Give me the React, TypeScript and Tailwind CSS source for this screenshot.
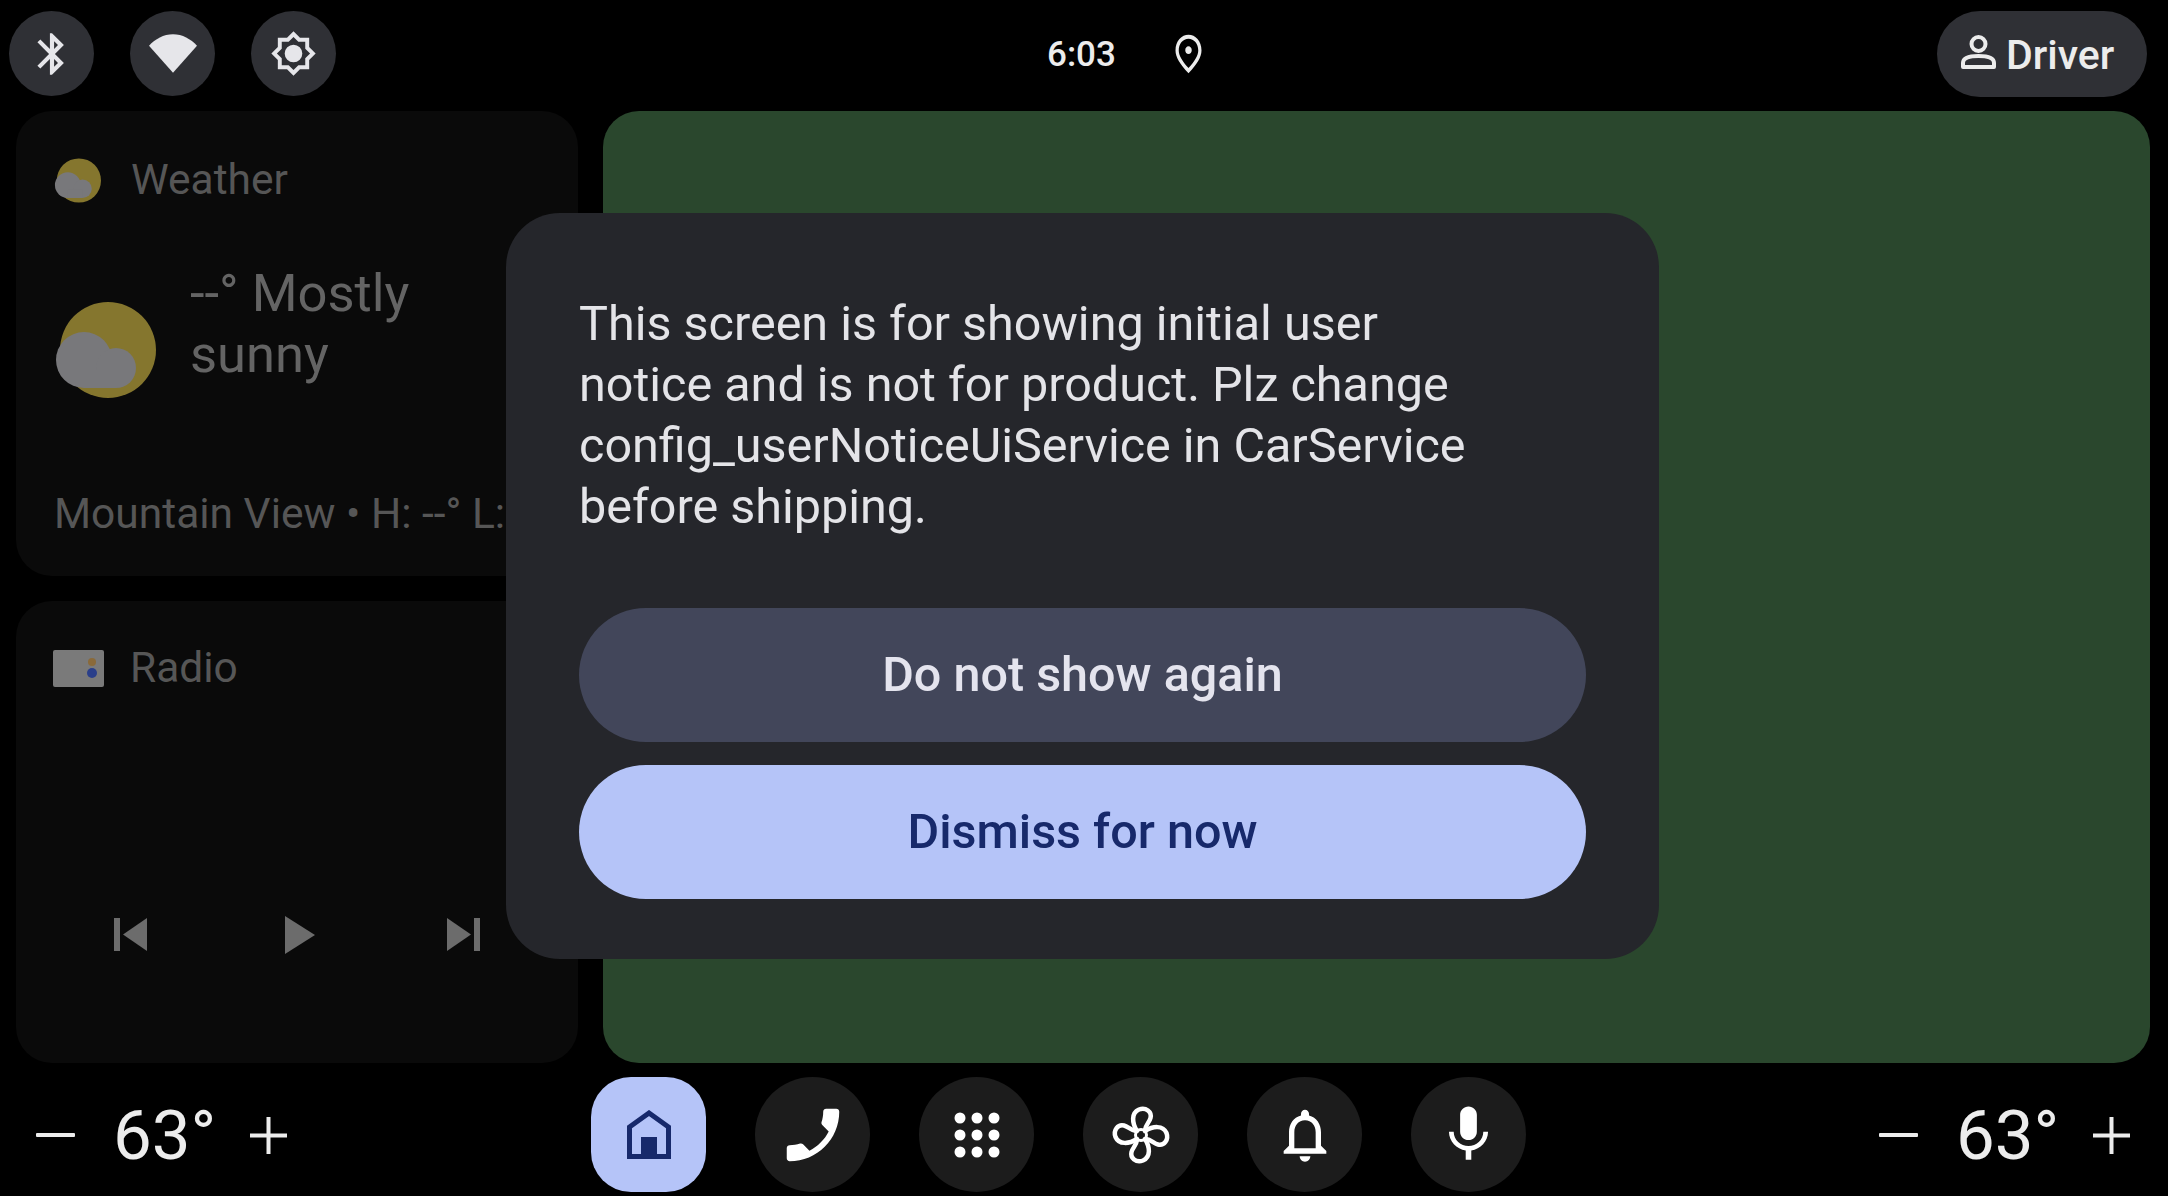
import React from "react";

const Icon = ({ d, size, className = "" }: { d: string; size: number; className?: string }) => (
  <svg width={size} height={size} viewBox="0 0 24 24" fill="currentColor" className={className}>
    <path d={d} />
  </svg>
);

const BT = "M17.71 7.71L12 2h-1v7.59L6.41 5 5 6.41 10.59 12 5 17.59 6.41 19 11 14.41V22h1l5.71-5.71-4.3-4.29 4.3-4.29zM13 5.83l1.88 1.88L13 9.59V5.83zm1.88 10.46L13 18.17v-3.76l1.88 1.88z";
const BRIGHT = "M20 8.69V4h-4.69L12 .69 8.69 4H4v4.69L.69 12 4 15.31V20h4.69L12 23.31 15.31 20H20v-4.69L23.31 12 20 8.69zm-2 5.79V18h-3.52L12 20.48 9.52 18H6v-3.52L3.52 12 6 9.52V6h3.52L12 3.52 14.48 6H18v3.52L20.48 12 18 14.48zM12 7.5a4.5 4.5 0 1 0 0 9 4.5 4.5 0 0 0 0-9z";
const PIN = "M12 12c-1.1 0-2-.9-2-2s.9-2 2-2 2 .9 2 2-.9 2-2 2zm6-1.8C18 6.57 15.35 4 12 4s-6 2.57-6 6.2c0 2.34 1.95 5.44 6 9.14 4.05-3.7 6-6.8 6-9.14zM12 2c4.2 0 8 3.22 8 8.2 0 3.32-2.67 7.25-8 11.8-5.33-4.55-8-8.48-8-11.8C4 5.22 7.8 2 12 2z";
const PHONE = "M6.62 10.79c1.44 2.83 3.76 5.14 6.59 6.59l2.2-2.2c.27-.27.67-.36 1.02-.24 1.12.37 2.33.57 3.57.57.55 0 1 .45 1 1V20c0 .55-.45 1-1 1-9.39 0-17-7.61-17-17 0-.55.45-1 1-1h3.5c.55 0 1 .45 1 1 0 1.25.2 2.45.57 3.57.11.35.03.74-.25 1.02l-2.2 2.2z";
const BELL = "M12 22c1.1 0 2-.9 2-2h-4c0 1.1.89 2 2 2zm6-6v-5c0-3.07-1.64-5.64-4.5-6.32V4c0-.83-.67-1.5-1.5-1.5s-1.5.67-1.5 1.5v.68C7.63 5.36 6 7.92 6 11v5l-2 2v1h16v-1l-2-2zm-2 1H8v-6c0-2.48 1.51-4.5 4-4.5s4 2.02 4 4.5v6z";
const MIC = "M12 14c1.66 0 2.99-1.34 2.99-3L15 5c0-1.66-1.34-3-3-3S9 3.34 9 5v6c0 1.66 1.34 3 3 3zm5.3-3c0 3-2.54 5.1-5.3 5.1S6.7 14 6.7 11H5c0 3.41 2.72 6.23 6 6.72V21h2v-3.28c3.28-.48 6-3.3 6-6.72h-1.7z";
const PETAL = "M36 36C31 28 30 18 38 14.5C45 12 51 17 49.500 23C48.500 27 44.500 30 44 35";

const StatusButton = ({ children }: { children: React.ReactNode }) => (
  <div className="w-[85px] h-[85px] rounded-full bg-[#2f3035] text-[#e6e6ea] flex items-center justify-center">{children}</div>
);

const NavButton = ({ children }: { children: React.ReactNode }) => (
  <div className="w-[115px] h-[115px] rounded-full bg-[#1c1c1c] text-white flex items-center justify-center">{children}</div>
);

const WeatherIcon = ({ size }: { size: number }) => (
  <svg width={size} height={size} viewBox="0 0 102 100">
    <circle cx="54" cy="50" r="48" fill="#85762e" />
    <g fill="#78787b">
      <circle cx="30" cy="60" r="28" />
      <circle cx="62" cy="68" r="20" />
      <rect x="30" y="70" width="32" height="18" />
    </g>
  </svg>
);

const Temp = () => (
  <div className="flex items-center text-[#ececec]">
    <svg width="39" height="6" viewBox="0 0 39 6"><rect y="1" width="39" height="4" rx="1" fill="currentColor" /></svg>
    <span className="ml-[38px] mr-[42px] text-[69px] leading-none font-normal w-[95px] whitespace-nowrap">63°</span>
    <svg width="37" height="37" viewBox="0 0 37 37"><path d="M0 18.5h37M18.5 0v37" stroke="currentColor" strokeWidth="4" /></svg>
  </div>
);

export default function App() {
  return (
    <div className="relative w-[2168px] h-[1196px] bg-black overflow-hidden flex flex-col font-['Roboto',sans-serif]">
      <header className="shrink-0 h-[111px] pt-[11px] pl-[9px] pr-[21px] flex items-start">
        <div className="w-[600px] flex gap-[36px]">
          <StatusButton><Icon d={BT} size={50} /></StatusButton>
          <StatusButton>
            <svg width="48" height="39" viewBox="0 0 62 50"><path d="M31 50L0 15C8 6 19 0 31 0s23 6 31 15z" fill="currentColor" /></svg>
          </StatusButton>
          <StatusButton><Icon d={BRIGHT} size={47} /></StatusButton>
        </div>
        <div className="ml-[438px] h-[86px] flex items-center text-[#ececec]">
          <span className="text-[35px] leading-none font-medium w-[69px] whitespace-nowrap">6:03</span>
          <svg width="39" height="46" viewBox="0 0 24 24" preserveAspectRatio="none" fill="currentColor" className="ml-[53px]"><path d={PIN} /></svg>
        </div>
        <div className="ml-auto w-[210px] h-[86px] rounded-full bg-[#2f3035] text-[#ececec] flex items-center pl-[13px]">
          <svg width="54" height="60" viewBox="0 0 54 60" fill="none" stroke="currentColor" strokeWidth="4">
            <circle cx="28.5" cy="20" r="7" />
            <path d="M13 43v-4c0-5 7-7 15.500-7S44 34 44 39v4z" strokeLinejoin="round" />
          </svg>
          <span className="ml-[2px] pt-[3px] text-[41px] leading-none font-medium">Driver</span>
        </div>
      </header>

      <main className="shrink-0 h-[952px] pl-[16px] pr-[18px] flex gap-[25px]">
        <div className="w-[562px] flex flex-col gap-[25px]">
          <section className="h-[465px] rounded-[36px] bg-[#0a0a0a] pl-[38px] overflow-hidden">
            <div className="flex items-center h-[46px] mt-[46px]">
              <WeatherIcon size={47} />
              <span className="ml-[30px] text-[42.5px] leading-none text-[#565656]">Weather</span>
            </div>
            <div className="flex items-start mt-[60px]">
              <div className="mt-[36px]"><WeatherIcon size={102} /></div>
              <div className="ml-[34px] text-[52.5px] leading-[61px] text-[#646464]">
                --° Mostly<br />sunny
              </div>
            </div>
            <div className="mt-[92px] text-[42.5px] leading-none text-[#565656] whitespace-nowrap">Mountain View • H: --° L: --°</div>
          </section>
          <section className="flex-1 rounded-[36px] bg-[#0a0a0a] pl-[37px] flex flex-col">
            <div className="flex items-center mt-[46px]">
              <svg width="51" height="37" viewBox="0 0 51 37">
                <rect width="51" height="37" rx="2" fill="#7a7a7a" />
                <circle cx="39" cy="12" r="4" fill="#8a6a3a" />
                <circle cx="39" cy="23" r="5" fill="#2a3f8a" />
              </svg>
              <span className="ml-[26px] text-[42.5px] leading-none text-[#565656]">Radio</span>
            </div>
            <div className="mt-[226px] flex items-center pl-[61px]">
              <svg width="33" height="33" viewBox="0 0 33 33" fill="#6c6c6c"><rect width="6" height="33" /><path d="M33 0v33L9 16.5z" /></svg>
              <svg width="30" height="38" viewBox="0 0 30 38" fill="#6c6c6c" className="ml-[138px]"><path d="M0 0l30 19L0 38z" /></svg>
              <svg width="33" height="33" viewBox="0 0 33 33" fill="#6c6c6c" className="ml-[132px]"><rect x="27" width="6" height="33" /><path d="M0 0v33l24-16.5z" /></svg>
            </div>
          </section>
        </div>
        <section className="flex-1 rounded-[36px] bg-[#2a472d]" />
      </main>

      <footer className="h-[133px] shrink-0 pl-[36px] pr-[38px] flex items-start">
        <div className="h-[144px] flex items-center"><Temp /></div>
        <nav className="ml-[304px] pt-[14px] flex gap-[49px]">
          <div className="w-[115px] h-[115px] rounded-[40px] bg-[#b5c4f8] text-[#17296b] flex items-center justify-center">
            <svg width="44" height="49" viewBox="0 0 44 49" fill="none">
              <path d="M2.5 46.500V17L22 3l19.500 14v29.500z" stroke="currentColor" strokeWidth="5" strokeLinejoin="miter" />
              <rect x="14" y="27" width="16" height="20" fill="currentColor" />
            </svg>
          </div>
          <NavButton><Icon d={PHONE} size={70} className="-scale-x-100" /></NavButton>
          <NavButton>
            <svg width="46" height="46" viewBox="0 0 46 46" fill="currentColor">
              {[6, 23, 40].map((y) => [6, 23, 40].map((x) => <circle key={`${x}-${y}`} cx={x} cy={y} r="5.5" />))}
            </svg>
          </NavButton>
          <NavButton>
            <svg width="80" height="80" viewBox="0 0 80 80" fill="none" stroke="currentColor" strokeWidth="4.500" strokeLinecap="round" strokeLinejoin="round">
              {[0, 90, 180, 270].map((r) => <path key={r} d={PETAL} transform={`rotate(${r} 40 40)`} />)}
              <circle cx="40" cy="40" r="5.500" strokeWidth="3" />
            </svg>
          </NavButton>
          <NavButton><Icon d={BELL} size={64} /></NavButton>
          <NavButton><Icon d={MIC} size={67} /></NavButton>
        </nav>
        <div className="ml-auto h-[144px] flex items-center"><Temp /></div>
      </footer>

      <div className="absolute left-[506px] top-[213px] w-[1153px] h-[746px] rounded-[54px] bg-[#25262b] px-[73px] pt-[80px] flex flex-col">
        <p className="max-w-[905px] h-[246px] text-[48.5px] leading-[61px] text-[#e4e4e8]">
          This screen is for showing initial user notice and is not for product. Plz change config_userNoticeUiService in CarService before shipping.
        </p>
        <div className="mt-[69px] flex flex-col gap-[23px]">
          <div className="h-[134px] rounded-full bg-[#42465a] text-[#e4e4ee] flex items-center justify-center text-[48.5px] font-medium">Do not show again</div>
          <div className="h-[134px] rounded-full bg-[#b5c4f8] text-[#17296b] flex items-center justify-center text-[48.5px] font-medium">Dismiss for now</div>
        </div>
      </div>
    </div>
  );
}
